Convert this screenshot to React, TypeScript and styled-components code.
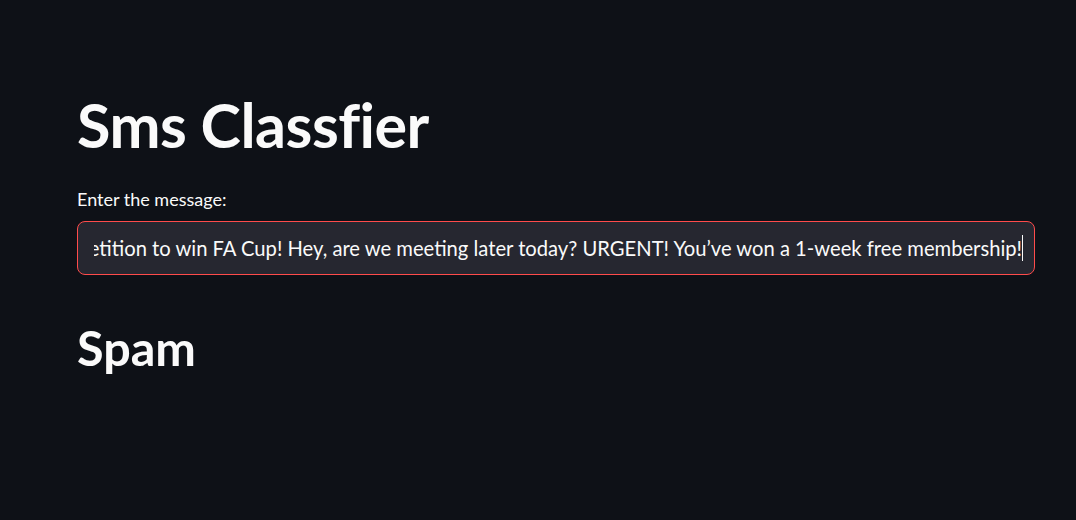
import styled, { createGlobalStyle } from "styled-components";

const GlobalStyle = createGlobalStyle`
  html, body {
    margin: 0;
    padding: 0;
    background-color: #0e1117;
  }
  body {
    font-family: Lato, "Noto Sans", sans-serif;
    color: #fafafa;
  }
`;

const Wrapper = styled.div`
  display: flex;
  flex-direction: column;
  min-height: 520px;
  padding: 80px 41px 0 77px;
  box-sizing: border-box;
`;

const Title = styled.h1`
  margin: 0;
  font-size: 61px;
  font-weight: 700;
  line-height: 90px;
  letter-spacing: -0.5px;
`;

const Label = styled.label`
  margin-top: 16px;
  font-size: 18px;
  line-height: 26px;
`;

const InputBox = styled.div`
  display: flex;
  align-items: center;
  height: 54px;
  margin-top: 9px;
  padding: 0 11px 0 16px;
  box-sizing: border-box;
  background-color: #262730;
  border: 1px solid #ff4b4b;
  border-radius: 8px;
`;

const Viewport = styled.div`
  display: flex;
  justify-content: flex-end;
  align-items: center;
  flex: 1;
  overflow: hidden;
`;

const Value = styled.span`
  flex-shrink: 0;
  white-space: nowrap;
  font-size: 20.2px;
`;

const Caret = styled.span`
  flex-shrink: 0;
  width: 1px;
  height: 26px;
  background-color: #fafafa;
`;

const Result = styled.h2`
  margin: 42px 0 0;
  font-size: 48.5px;
  font-weight: 700;
  line-height: 60px;
`;

const message =
  "Congratulations! You have been selected for a free entry in our weekly competition to win FA Cup! Hey, are we meeting later today? URGENT! You\u2019ve won a 1-week free membership!";

export default function App() {
  return (
    <Wrapper>
      <GlobalStyle />
      <Title>Sms Classfier</Title>
      <Label>Enter the message:</Label>
      <InputBox>
        <Viewport>
          <Value>{message}</Value>
          <Caret />
        </Viewport>
      </InputBox>
      <Result>Spam</Result>
    </Wrapper>
  );
}
